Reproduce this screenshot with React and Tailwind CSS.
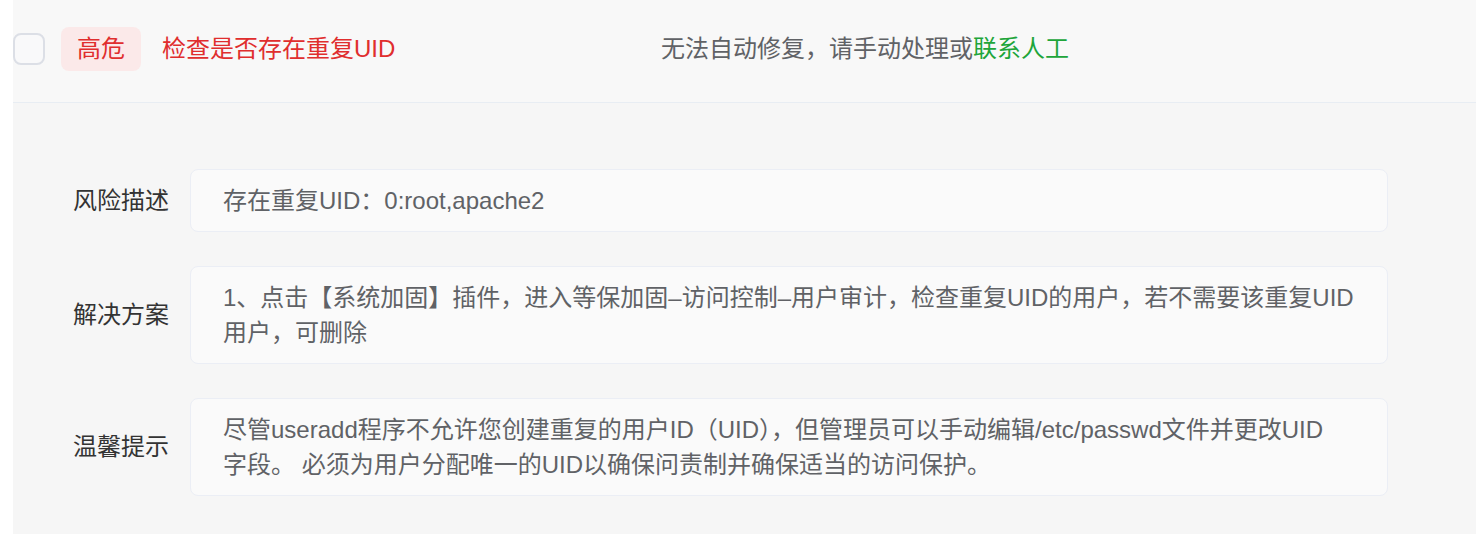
export default function App() {
  const font = { fontFamily: '"Liberation Sans", "Noto Sans CJK SC", sans-serif' };
  const rows = [
    { label: "风险描述", lines: ["存在重复UID：0:root,apache2"] },
    {
      label: "解决方案",
      lines: [
        "1、点击【系统加固】插件，进入等保加固–访问控制–用户审计，检查重复UID的用户，若不需要该重复UID",
        "用户，可删除",
      ],
    },
    {
      label: "温馨提示",
      lines: [
        "尽管useradd程序不允许您创建重复的用户ID（UID），但管理员可以手动编辑/etc/passwd文件并更改UID",
        "字段。 必须为用户分配唯一的UID以确保问责制并确保适当的访问保护。",
      ],
    },
  ];
  return (
    <div className="w-[1476px] h-[534px] bg-white pl-[13px] overflow-hidden" style={font}>
      <div className="h-full bg-[#f6f6f6] flex flex-col">
        <div className="h-[103px] bg-[#f8f8f8] border-b border-[#e8edf3] flex items-center pb-[5px] text-[24px] leading-[34px]">
          <div className="w-[32px] h-[32px] rounded-[8px] border-2 border-[#dcdfe6] bg-[#f9f9fa] shrink-0" />
          <div className="ml-[16px] w-[80px] h-[44px] rounded-[8px] bg-[#fbe9e9] text-[#e02e2e] flex items-center justify-center shrink-0">
            高危
          </div>
          <div className="ml-[21px] w-[499px] text-[#e02e2e] shrink-0">检查是否存在重复UID</div>
          <div className="text-[#606266]">
            无法自动修复，请手动处理或<span className="text-[#20a53a]">联系人工</span>
          </div>
        </div>
        <div className="flex flex-col gap-[34px] pt-[66px] pr-[88px]">
          {rows.map((r) => (
            <div key={r.label} className="flex items-center">
              <div className="w-[177px] shrink-0 text-right pr-[21px] text-[24px] text-[#333333] leading-[34px]">
                {r.label}
              </div>
              <div className="flex-1 rounded-[8px] border-[1.5px] border-[#ebeef5] bg-[#fafafa] pl-[32px] pr-[8px] py-[13px] text-[24px] leading-[35px] text-[#606266]">
                {r.lines.map((l, i) => (
                  <div key={i} className="whitespace-nowrap">
                    {l}
                  </div>
                ))}
              </div>
            </div>
          ))}
        </div>
      </div>
    </div>
  );
}
